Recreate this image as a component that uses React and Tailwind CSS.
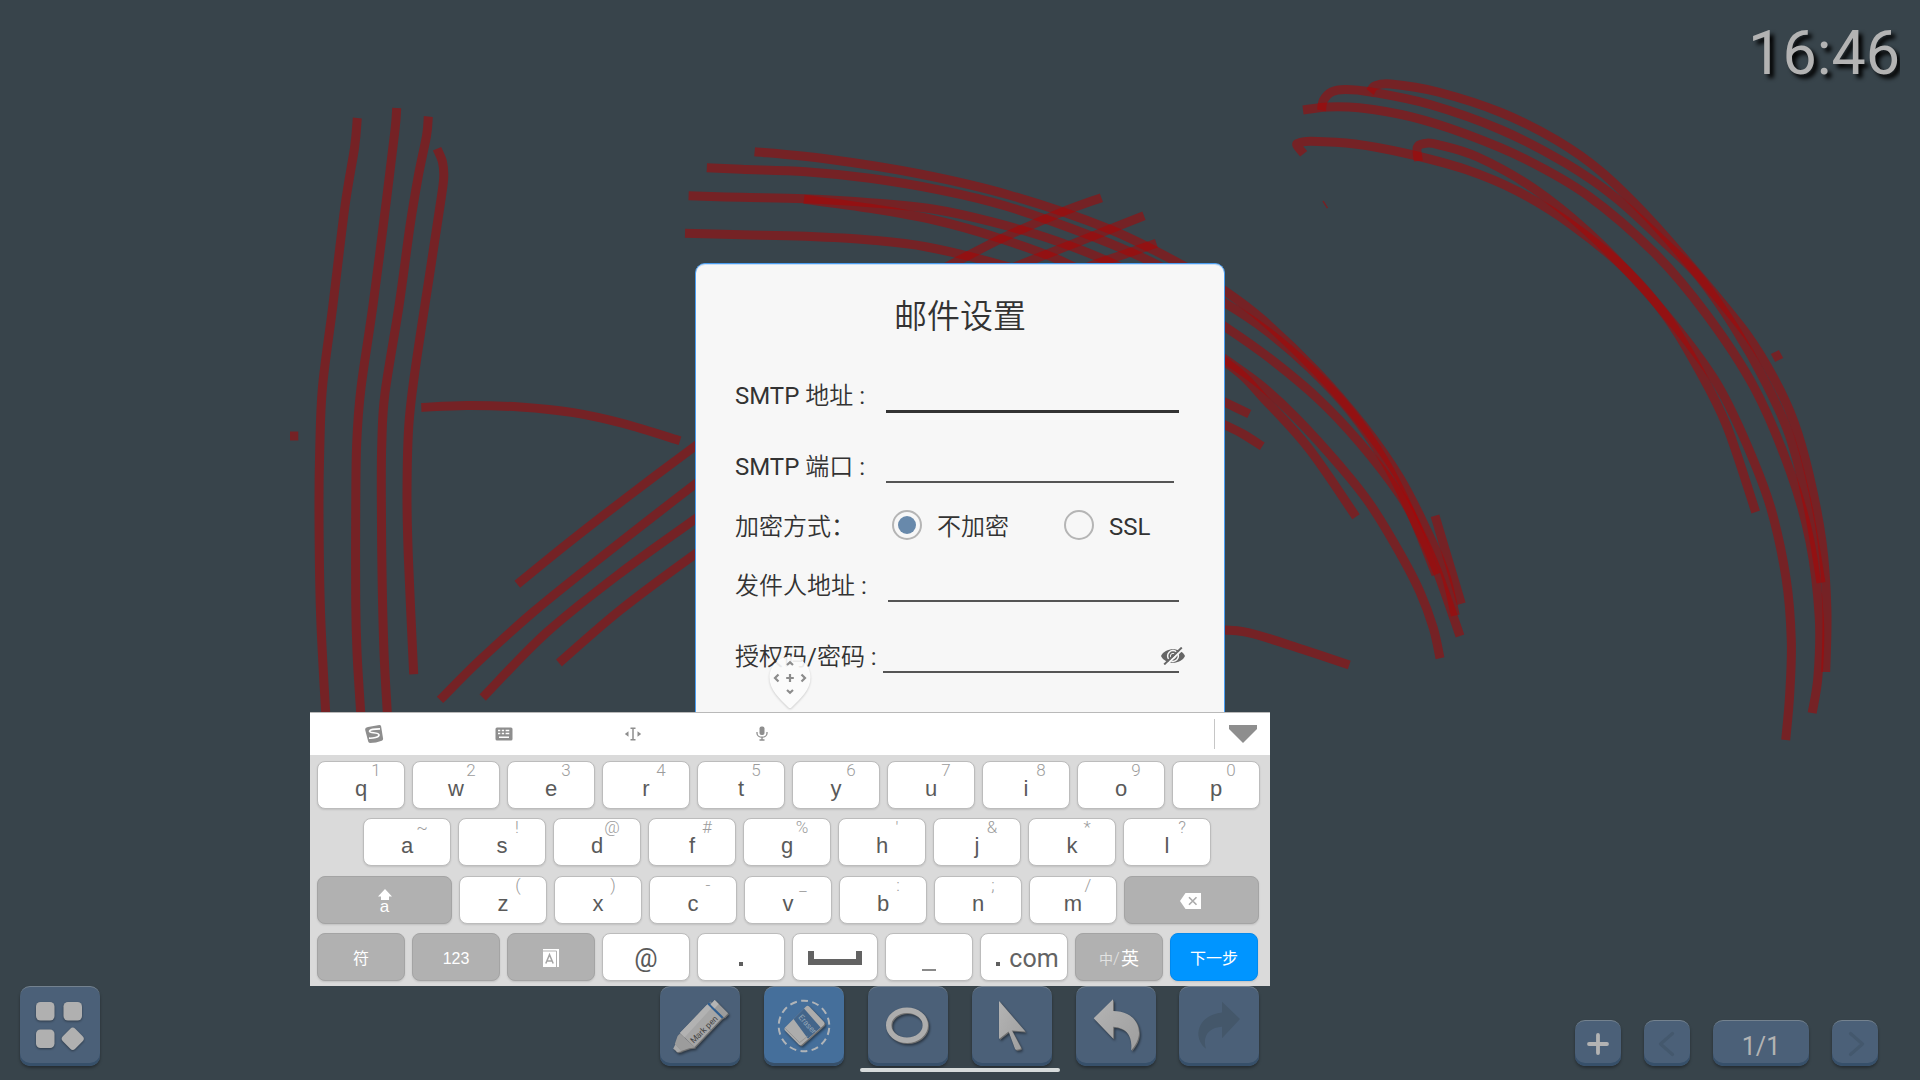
import React from "react";

/* Freehand marker strokes on the whiteboard, as lists of sampled points. */
const STROKES = [
  [[357.3,118],[354.5,148],[345,206],[332.7,307],[322.5,387],[319.7,451],[319,512],[320.5,612],[325.7,713]],
  [[396.7,108],[395,130],[386.7,198],[373.3,303],[361,388],[356.7,443],[355.7,512],[355.7,600],[357,652],[360.7,713]],
  [[428.3,116.5],[426.5,136],[418.3,176],[410,226],[399,306],[385,393],[381.8,443],[381.3,492],[382,572],[384,652],[387.3,713]],
  [[437,148.7],[442.5,162],[443.7,178],[440,206],[428.3,283],[415,371],[408.7,427],[407,492],[408.3,556],[413.7,674.2]],
  [[421.3,407.4],[466.7,405.4],[520,407],[573.3,412.6],[623.3,423.5],[680,440.7]],
  [[290,436],[298.3,436]],
  [[517.3,584.2],[570,541.5],[630,495],[695.3,446],[740,414]],
  [[440,699.9],[480,660],[533.3,612],[593.3,563.5],[695.3,484],[740,452]],
  [[482.7,697.5],[546.7,632.4],[620,573.3],[695.3,519],[740,488]],
  [[559,663],[620,610.3],[695.3,554],[740,524]],
  [[754.6,151.7],[827,159],[920,174],[1009,195],[1109,229],[1184,266],[1225,291],[1263,320],[1316.7,371.5],[1363,425],[1400,478],[1426.7,530],[1445,573],[1455.3,615.5]],
  [[706.8,167.7],[741.4,169.3],[805.7,171.7],[870,178.3],[941.4,190.3],[1005.7,206],[1091.4,236],[1155.7,264],[1225,303],[1266.7,331],[1310,368.3],[1350,411],[1383.3,459],[1410,511],[1436,574.5]],
  [[688.6,195.7],[741,197.3],[804,198.7],[870,202.7],[934,209.3],[991,221.7],[1055.7,240.7],[1112.9,263.5],[1180,298],[1225,326.7],[1266.7,356],[1316.7,397.5],[1360,443],[1400,495],[1418,528],[1436.7,570],[1460,636]],
  [[804,199.3],[870,208.3],[934.3,220],[998.6,238],[1066,263],[1150,308],[1225,359.3],[1260,384.5],[1296.7,418.3],[1340,466],[1370,504],[1400,553.3],[1420,592],[1433.3,628],[1440,658.3]],
  [[685,233.3],[741.4,234.7],[805.7,236.3],[870,240],[927,247],[1002,265],[1120,300],[1225,362],[1266.7,401.7],[1310,450],[1356,516.7]],
  [[1435,515.7],[1461.3,603.7]],
  [[935,273],[1002,238.3],[1059,213.3],[1101.4,197.7]],
  [[1000,273],[1022,264],[1091,236.7],[1144,215.7]],
  [[1080,270],[1098.6,263],[1134,251],[1156.4,243.3]],
  [[1215,398],[1225,402.3],[1249.3,414]],
  [[1215,420.5],[1225,425],[1243,434],[1262.3,446.3]],
  [[1215,629.5],[1225,630],[1243,631.7],[1266.7,637.7],[1303,649.5],[1349.3,665]],
  [[1370.2,92.1],[1374.9,86],[1390.7,84],[1438,92],[1501,112.5],[1556.8,140.4],[1600.3,171],[1647.7,217],[1699,275.5],[1746.6,334],[1774.3,379],[1794,422],[1809,474],[1822,542],[1826.9,610],[1825.7,672]],
  [[1321.5,110.4],[1323.5,100.2],[1331.4,92],[1345.2,89.5],[1371,92],[1430,104.5],[1501.4,130],[1564.7,162.7],[1616,198],[1667.5,245.3],[1699,277],[1734.7,327.9],[1766.4,384],[1790,437],[1807.9,506.4],[1821,582.8]],
  [[1303,110],[1327.4,106.9],[1359,107.8],[1410.5,116.7],[1465.8,134],[1525,159],[1588.4,196],[1655.6,254],[1707,315],[1754.5,388],[1790,470.7],[1809.9,541],[1819.3,618],[1818,676],[1812.2,713]],
  [[1303.7,153.8],[1297,145.5],[1299,143],[1311.6,141.3],[1355,144],[1406.5,153.5],[1465.8,169.5],[1517,191],[1572.6,225.5],[1628,271.5],[1667.5,318],[1699,370],[1726.8,426],[1755.7,512]],
  [[1418.4,161],[1417.2,147.5],[1424.3,143.5],[1438,144.6],[1477.7,157],[1533,188],[1588.4,232.3],[1643.8,289],[1687.3,341.3],[1719,387],[1746.6,444],[1770.3,506.4],[1786,577.9],[1791.3,640.4],[1789.7,694],[1785.7,740]],
  [[1773,358],[1781,354]],
];

/* Catmull-Rom interpolation turned into cubic Béziers. */
function smooth(pts) {
  let d = `M${pts[0][0]} ${pts[0][1]}`;
  for (let i = 0; i < pts.length - 1; i++) {
    const p0 = pts[i - 1] || pts[i];
    const p1 = pts[i];
    const p2 = pts[i + 1];
    const p3 = pts[i + 2] || p2;
    d += `C${(p1[0] + (p2[0] - p0[0]) / 6).toFixed(1)} ${(p1[1] + (p2[1] - p0[1]) / 6).toFixed(1)} ${(p2[0] - (p3[0] - p1[0]) / 6).toFixed(1)} ${(p2[1] - (p3[1] - p1[1]) / 6).toFixed(1)} ${p2[0]} ${p2[1]}`;
  }
  return d;
}

function Drawing() {
  return (
    <svg className="absolute inset-0 h-[1080px] w-[1920px]" viewBox="0 0 1920 1080" fill="none">
      {STROKES.map((s, i) => (
        <path key={i} d={smooth(s)} stroke="#b10000" strokeOpacity=".5" strokeWidth="9" />
      ))}
      <path d="M1323 201l4.500 7.200" stroke="#b10000" strokeOpacity=".5" strokeWidth="1.500" />
    </svg>
  );
}

const CARD =
  "rounded-[10px] border-t border-t-[#74828f] shadow-[inset_0_-3px_0_#37506a,0_2px_3px_rgba(0,0,0,0.35)] flex items-center justify-center";

function Tool({ active, children }) {
  return (
    <div className={`${CARD} h-20 w-20 shrink-0 ${active ? "bg-[#456f9b]" : "bg-[#4b6078]"}`}>
      <svg viewBox="0 0 80 80" className="-mt-px h-20 w-20 shrink-0" fill="none">
        {children}
      </svg>
    </div>
  );
}

function Toolbar() {
  return (
    <div className="absolute left-[660px] top-[986px] flex gap-[23.9px]">
      <svg className="absolute h-0 w-0">
        <defs>
          <linearGradient id="metal" x1="0" y1="0" x2="1" y2="1">
            <stop offset="0" stopColor="#b4b4b4" />
            <stop offset="1" stopColor="#9e9e9e" />
          </linearGradient>
          <filter id="drop" x="-20%" y="-20%" width="150%" height="150%" colorInterpolationFilters="sRGB">
            <feDropShadow dx="1" dy="1" stdDeviation="0" floodColor="#6f6f6f" />
            <feDropShadow dx="1" dy="1.5" stdDeviation="1.2" floodColor="#000" floodOpacity=".45" />
          </filter>
        </defs>
      </svg>
      <Tool>
        <g filter="url(#drop)">
          <path d="M15.500 58l-2.300 4.700 2.200 1.600 1.600 2 4.600-1z" fill="#a9a9a9" />
          <path d="M20 47.500L17.600 50l-2.800 8 6.400 7 8-2.800 5.800-.7z" fill="#9c9c9c" />
          <path d="M20 47L47.500 18.300 61.800 32.200 34.500 61z" fill="#a6a6a6" />
          <path d="M20 47L47.500 18.300 51.500 22 24.500 51.500z" fill="#b2b2b2" />
          <path d="M47.500 18.300l1.600-1.800L63.600 31l-1.800 1.600z" fill="#2f5f93" />
          <path d="M49.100 16.500l1.500-1 14 14-1 1.500z" fill="#6d7d8d" />
          <path d="M50.600 18.500L54.700 14 68 27.300 64 31.500z" fill="#9c9c9c" />
          <path d="M50.600 18.500L54.700 14l4 4-4.100 4.500z" fill="#b4b4b4" />
        </g>
        <text x="46" y="45.500" transform="rotate(-45 46 45.500)" textAnchor="middle" fontSize="8.400" fill="#444" fontFamily="Roboto, sans-serif">Mark pen</text>
      </Tool>
      <Tool active>
        <circle cx="40" cy="40" r="25.300" stroke="#b0b4b8" strokeWidth="2" strokeDasharray="7 4.350" strokeDashoffset="-2" />
        <g filter="url(#drop)">
          <path d="M42 20.500q1.600-1.600 3.200 0L59.500 35.400q1.800 1.800 .2 3.800L38 58.500q-1.700 1.400-3.200 0L21 44.500q-1.200-1.600 0-3z" fill="#acacac" />
          <path d="M40 22.500L56.600 41.500 44 52.800 29.500 33z" fill="#43658a" />
          <path d="M21.200 42.200L35.500 56.600l8-6.300" stroke="#959595" strokeWidth="1" />
        </g>
        <text x="41.500" y="40" transform="rotate(48 41.500 40)" textAnchor="middle" fontSize="8" fill="#93a5b7" fontFamily="Roboto, sans-serif">Eraser</text>
      </Tool>
      <Tool>
        <g filter="url(#drop)">
          <ellipse cx="39" cy="39.300" rx="18.300" ry="15" stroke="#adadad" strokeWidth="5.400" />
        </g>
      </Tool>
      <Tool>
        <path filter="url(#drop)" d="M27 15L53.300 45.600 39.800 44.400 48.800 61.500q.4 1.300-1.200 1.800l-3 .5q-1.300.1-1.600-1L36.600 45.600 27 53z" fill="url(#metal)" />
      </Tool>
      <Tool>
        <path filter="url(#drop)" d="M17.700 32.300L37 13.300V25C53 25 62.500 34 63 46.500 63 53 60 59 55 64.500 57 51 51 41.500 37.200 40.800V52.500z" fill="url(#metal)" />
      </Tool>
      <Tool>
        <path d="M61 33L43 15.700V26.500C29 28 20 36 19.300 47.500 19.500 53.500 22 59 27 62.800 23 50 30 41.500 43 40.800V52.300z" fill="#44576a" />
      </Tool>
    </div>
  );
}

function Pager() {
  const c = `${CARD} h-[46px] bg-[#4b6078]`;
  return (
    <div className="absolute left-[1575px] top-[1020px] flex gap-[23px]">
      <div className={`${c} w-[46px]`}>
        <svg viewBox="0 0 24 24" className="h-6 w-6" stroke="#b3b3b3" strokeWidth="3.800" strokeLinecap="round">
          <path d="M12 3v18M3 12h18" />
        </svg>
      </div>
      <div className={`${c} w-[46px]`}>
        <svg viewBox="0 0 24 26" className="h-[26px] w-6" fill="none" stroke="#44586d" strokeWidth="3.200" strokeLinecap="round" strokeLinejoin="round">
          <path d="M17.500 2.500L5.500 13l12 10.500" />
        </svg>
      </div>
      <div className={`${c} w-[96px] pt-1.5 text-[25px] leading-none text-[#b3b3b3]`}>1/1</div>
      <div className={`${c} w-[46px]`}>
        <svg viewBox="0 0 24 26" className="h-[26px] w-6" fill="none" stroke="#44586d" strokeWidth="3.200" strokeLinecap="round" strokeLinejoin="round">
          <path d="M7.500 2.500L19.500 13l-12 10.500" />
        </svg>
      </div>
    </div>
  );
}

function MenuButton() {
  return (
    <div className="absolute left-5 top-[986px]">
      <Tool>
        <g fill="#b0b0b0" className="drop-shadow-[0_1px_1px_rgba(0,0,0,0.4)]">
          <rect x="16" y="16" width="18.500" height="18.500" rx="4.500" />
          <rect x="43.500" y="16" width="18.500" height="18.500" rx="4.500" />
          <rect x="16" y="43.500" width="18.500" height="18.500" rx="4.500" />
          <rect x="44" y="44" width="17.500" height="17.500" rx="3.500" transform="rotate(45 52.750 52.750)" />
        </g>
      </Tool>
    </div>
  );
}

function Radio({ checked }) {
  return (
    <span className="flex h-[30px] w-[30px] shrink-0 items-center justify-center rounded-full border-2 border-[#b5b5b5]">
      {checked && <span className="h-[18px] w-[18px] rounded-full bg-[#6889ab]" />}
    </span>
  );
}

function EyeOff() {
  return (
    <svg viewBox="0 0 24 18" className="h-[18px] w-6" fill="none">
      <path d="M0 9C4 0 20 0 24 9 20 18 4 18 0 9z" fill="#666" />
      <circle cx="12" cy="9" r="5.400" stroke="#f7f7f7" strokeWidth="1.500" />
      <circle cx="12" cy="9" r="2.600" stroke="#f7f7f7" strokeWidth="1" />
      <path d="M4.800 18.500L22.400 1.500" stroke="#f7f7f7" strokeWidth="2" />
      <path d="M3.200 17.500L20.800.5" stroke="#666" strokeWidth="1.900" />
    </svg>
  );
}

function MailDialog() {
  return (
    <div className="absolute left-[695px] top-[263px] h-[560px] w-[530px] rounded-[10px] border border-[#4a9ef2] bg-[#f7f7f7] pl-[39px] pr-[45px] font-['Roboto','Noto_Sans_CJK_SC_DemiLight','Noto_Sans_CJK_SC',sans-serif] text-2xl text-[#333] shadow-[inset_0_1px_0_#c9def5]">
      <h1 className="mt-[28px] flex h-12 items-center justify-center text-[33px] font-normal leading-none">
        <span className="pl-[6px]">邮件设置</span>
      </h1>
      <div className="mt-[38px] flex h-[35px]">
        <label className="w-[151px] leading-9">SMTP 地址 :</label>
        <div className="w-[293px] border-b-[3px] border-[#333]" />
      </div>
      <div className="mt-9 flex h-[34px]">
        <label className="w-[151px] leading-9">SMTP 端口 :</label>
        <div className="w-[288px] border-b-2 border-[#555]" />
      </div>
      <div className="mt-[24px] flex h-9 items-center">
        <label className="w-[157px] pt-[3px] leading-9">加密方式：</label>
        <Radio checked />
        <span className="ml-[15px] w-[127px] pt-[3px] leading-9">不加密</span>
        <Radio />
        <span className="ml-[15px] pt-[3px] leading-9">SSL</span>
      </div>
      <div className="mt-[25px] flex h-[34px]">
        <label className="w-[153px] leading-9">发件人地址 :</label>
        <div className="w-[291px] border-b-2 border-[#555]" />
      </div>
      <div className="mt-[37px] flex h-[34px]">
        <label className="w-[148px] shrink-0 whitespace-nowrap leading-9">授权码/密码 :</label>
        <div className="flex w-[296px] shrink-0 justify-end border-b-2 border-[#555]">
          <div className="-mr-1.5 mt-2"><EyeOff /></div>
        </div>
      </div>
    </div>
  );
}

function CursorPin() {
  return (
    <svg viewBox="0 0 50 60" className="absolute left-[765px] top-[653px] h-[60px] w-[50px]" fill="none">
      <path
        d="M25 3.500C36 3.500 45.500 13 45.500 24.500 45.500 37 35 46 26.500 54.500q-1.500 1.200-3 0C15 46 4.500 37 4.500 24.500 4.500 13 14 3.500 25 3.500z"
        fill="#fff" fillOpacity=".9" className="drop-shadow-[0_1px_1px_rgba(0,0,0,0.2)]"
      />
      <g stroke="#8c8c8c" strokeWidth="2.200">
        <path d="M25 21v8M21.200 25h7.600M22 12l3-2.700 3 2.700M22 37l3 2.700 3-2.700M13.500 21.500l-3.500 3.500 3.500 3.500M36.500 21.500l3.500 3.500-3.500 3.500" />
      </g>
    </svg>
  );
}

const KEY = "flex h-12 shrink-0 items-center justify-center rounded-lg border shadow-[0_1px_2px_rgba(0,0,0,0.12)]";
const LIGHT = `${KEY} border-[#bcbcbc] bg-white text-[#5a5a5a]`;
const DARK = `${KEY} border-[#a4a4a4] bg-[#b1b1b1] text-white`;

function Letter({ k, hint }) {
  return (
    <div className={`${LIGHT} relative w-[88px]`}>
      <span className="mt-[7px] font-['Liberation_Sans',sans-serif] text-[22px] leading-6">{k}</span>
      <span className="absolute -top-px left-[46px] w-6 text-center text-[17px] font-light leading-[18px] text-[#9c9c9c]">{hint}</span>
    </div>
  );
}

function Row({ letters, hints }) {
  return [...letters].map((k, i) => <Letter key={k} k={k} hint={hints[i]} />);
}

function Keyboard() {
  return (
    <div className="absolute left-[310px] top-[712px] h-[274px] w-[960px] bg-[#dadada]">
      <div className="flex h-[43px] items-center border-t border-[#b9b9b9] bg-white pl-[54px] text-[#8e8e8e]">
        <svg viewBox="0 0 20 20" className="h-5 w-5" fill="none">
          <path d="M4 3L15.300 1q1.500 0 1.800 1.300l2 12.500q0 1.400-1.300 2Q12 19 6 19q-1.500 0-1.800-1.400L1.200 6Q.8 3.600 4 3z" fill="#8e8e8e" />
          <path d="M16 4.800C11 4.800 5.300 5.600 5.600 7.600 6 9.300 14.800 8.200 15 10.900 15 13.300 9 14.400 5 14.200" stroke="#fff" strokeWidth="1.700" />
        </svg>
        <svg viewBox="0 0 18 14" className="-mt-px ml-[110.500px] h-[14px] w-[18px]">
          <rect x=".5" y=".5" width="17" height="13" rx="1.500" fill="currentColor" />
          <path d="M3 3.500h2.300M6.800 3.500h2.300M10.600 3.500h3.700M3 6.500h2.300M6.800 6.500h2.300M10.600 6.500h3.700M4 10.300h10" stroke="#fff" strokeWidth="1.500" />
        </svg>
        <svg viewBox="0 0 18 14" className="-mt-px ml-[111px] h-[14px] w-[18px]" fill="none">
          <path d="M6.500 1.200h5M6.500 12.800h5M9 1v12" stroke="currentColor" strokeWidth="1.500" />
          <path d="M4.500 4.300v5.400L.8 7zM13.500 4.300v5.400L17.200 7z" fill="currentColor" />
        </svg>
        <svg viewBox="0 0 12 15" className="-mt-px ml-[114px] h-[15px] w-3" fill="none">
          <rect x="3.500" y=".5" width="5" height="8.500" rx="2" fill="currentColor" />
          <path d="M1 6v1.200a5 4 0 0 0 10 0V6M6 11v3M3.500 14h5" stroke="currentColor" strokeWidth="1.300" />
        </svg>
        <div className="ml-[446.500px] h-[30px] w-px bg-[#c6c6c6]" />
        <svg viewBox="0 0 28 18" className="ml-[14px] h-[18px] w-7" fill="currentColor">
          <path d="M0 0h28v4L14 18 0 4z" />
        </svg>
      </div>
      <div className="flex gap-[7px] pl-[7px] pt-[6px]">
        <Row letters="qwertyuiop" hints="1234567890" />
      </div>
      <div className="mt-[9px] flex gap-[7px] pl-[53px]">
        <Row letters="asdfghjkl" hints="~!@#%'&*?" />
      </div>
      <div className="mt-[10px] flex gap-[7px] pl-[7px]">
        <div className={`${DARK} w-[135px]`}>
          <div className="flex flex-col items-center">
            <svg viewBox="0 0 14 12" className="mt-px h-3 w-[14px]" fill="#fff"><path d="M7 0l7 7.500h-3V11H3V7.500H0z" /></svg>
            <span className="font-['Liberation_Sans',sans-serif] text-[17px] leading-[12px]">a</span>
          </div>
        </div>
        <Row letters="zxcvbnm" hints="()-_:;/" />
        <div className={`${DARK} w-[135px]`}>
          <svg viewBox="0 0 21 16" className="-ml-0.5 mt-0.5 h-4 w-[21px]" fill="none">
            <path d="M5.500 0H21v16H5.500L0 8z" fill="#fff" />
            <path d="M9 4.200l7.500 7.600M16.500 4.200L9 11.800" stroke="#aaa" strokeWidth="1.600" />
          </svg>
        </div>
      </div>
      <div className="mt-[9px] flex gap-[7px] pl-[7px]">
        <div className={`${DARK} w-[88px] pt-1 text-base`}>符</div>
        <div className={`${DARK} w-[88px] pt-1 font-['Liberation_Sans',sans-serif] text-base`}>123</div>
        <div className={`${DARK} w-[88px]`}>
          <svg viewBox="0 0 16 18" className="mt-0.5 h-[18px] w-4" fill="none">
            <path d="M0 0h16v18H0z" fill="#fff" />
            <path d="M0 2h13.500v16" stroke="#b1b1b1" strokeWidth="1" />
            <path d="M2.800 14.500l3.700-8.800 3.700 8.800M4 12h5" stroke="#a5a5a5" strokeWidth="1.500" />
          </svg>
        </div>
        <div className={`${LIGHT} w-[88px] pt-[3px] text-[26px]`}>@</div>
        <div className={`${LIGHT} w-[88px]`}><span className="mt-[14px] h-1 w-1 bg-[#5f5f5f]" /></div>
        <div className={`${LIGHT} w-[86px]`}>
          <div className="mt-[1px] h-[14px] w-[54px] border-x-[6px] border-b-[6px] border-[#636363]" />
        </div>
        <div className={`${LIGHT} w-[88px]`}><span className="mt-[25px] h-0.5 w-[14px] bg-[#8a8a8a]" /></div>
        <div className={`${LIGHT} w-[88px] pl-[7px]`}>
          <span className="mt-[14px] h-1 w-1 bg-[#5f5f5f]" />
          <span className="ml-[9px] mt-[3px] text-[25px] leading-none text-[#636363]">com</span>
        </div>
        <div className={`${DARK} w-[88px] pt-1`}>
          <span className="text-sm text-[#e2e2e2]">中</span>
          <span className="text-[17px] font-light text-[#e2e2e2]">/</span>
          <span className="ml-px text-lg">英</span>
        </div>
        <div className={`${KEY} w-[88px] border-[#0089ee] bg-[#0095ff] pt-1 text-base text-white`}>下一步</div>
      </div>
    </div>
  );
}

export default function App() {
  return (
    <div className="relative h-[1080px] w-[1920px] overflow-hidden bg-[#38444b] font-['Roboto','Noto_Sans_CJK_SC',sans-serif]" lang="zh-CN">
      <Drawing />
      <div className="absolute right-5 top-[13px] flex h-[80px] w-[156px] items-center justify-end overflow-hidden text-[61px] leading-none text-[#b3b3b3] [text-shadow:4px_4px_4px_#000]">
        16:46
      </div>
      <MenuButton />
      <Toolbar />
      <Pager />
      <div className="absolute left-[860px] top-[1068px] h-1 w-[200px] rounded-full bg-[#d6dbdb]" />
      <MailDialog />
      <CursorPin />
      <Keyboard />
    </div>
  );
}
